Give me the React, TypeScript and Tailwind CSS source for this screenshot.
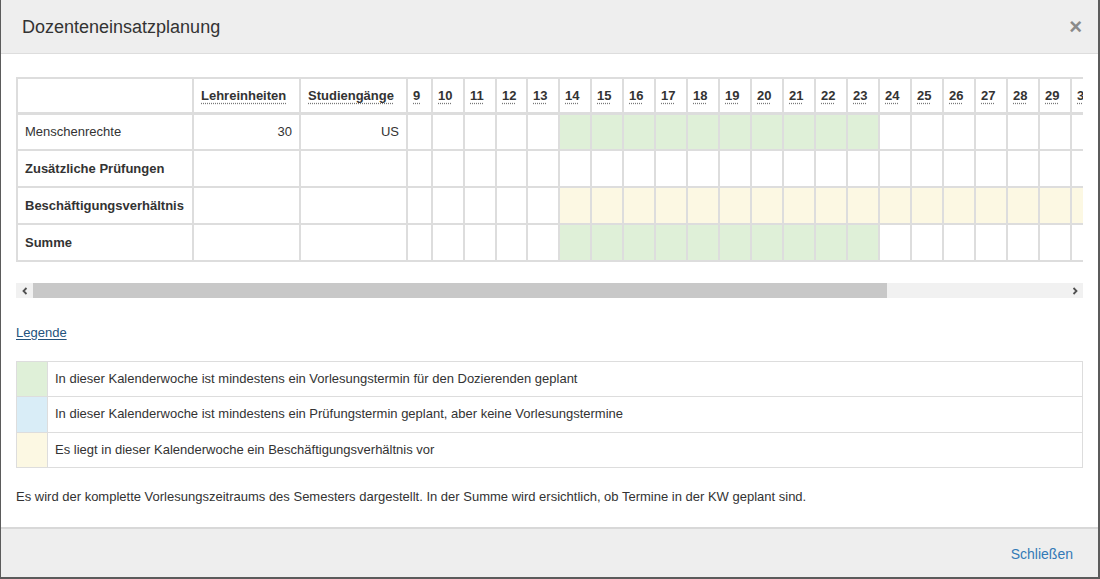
import React from "react";

const weeks = Array.from({ length: 27 }, (_, i) => i + 9);

type Row = {
  label: string;
  bold: boolean;
  le: string;
  sg: string;
  color: (w: number) => string;
};

const rows: Row[] = [
  { label: "Menschenrechte", bold: false, le: "30", sg: "US", color: (w) => (w >= 14 && w <= 23 ? "bg-[#dff0d8]" : "bg-white") },
  { label: "Zusätzliche Prüfungen", bold: true, le: "", sg: "", color: () => "bg-white" },
  { label: "Beschäftigungsverhältnis", bold: true, le: "", sg: "", color: (w) => (w >= 14 ? "bg-[#fcf8e3]" : "bg-white") },
  { label: "Summe", bold: true, le: "", sg: "", color: (w) => (w >= 14 && w <= 23 ? "bg-[#dff0d8]" : "bg-white") },
];

function Abbr({ children }: { children: React.ReactNode }) {
  return (
    <span className="underline decoration-dotted decoration-[#777] underline-offset-[3px]">{children}</span>
  );
}

function colClass(w: number) {
  if (w === 9) return "w-[25px]";
  if (w === 12) return "w-[31px]";
  return "w-[32px]";
}

export default function App() {
  return (
    <div
      className="w-[1100px] h-[579px] bg-[#5b5b5b] overflow-hidden text-[#333] text-[13px]"
      style={{ fontFamily: '"Liberation Sans", Arial, sans-serif' }}
    >
      <div className="ml-px w-[1097px] h-[577px] bg-white flex flex-col">
        {/* Header */}
        <div className="h-[54px] shrink-0 bg-[#eeeeee] border-b border-[#dddddd] flex items-center justify-between pl-[21px] pr-[15px]">
          <h4 className="text-[18px] leading-none text-[#333] pt-px">Dozenteneinsatzplanung</h4>
          <span className="text-[22px] font-bold leading-none text-[#8a8a8a] mr-[1px]">×</span>
        </div>

        {/* Body */}
        <div className="flex-1 pt-[23px] px-[15px]">
          <div className="w-[1067px] overflow-hidden">
            <table className="table-fixed border-collapse w-[1246px]">
              <colgroup>
                <col className="w-[176px]" />
                <col className="w-[107px]" />
                <col className="w-[107px]" />
                {weeks.map((w) => (
                  <col key={w} className={colClass(w)} />
                ))}
              </colgroup>
              <thead>
                <tr>
                  <th className="h-[35px] border-2 border-b-[3px] border-[#dddddd]" />
                  <th className="h-[35px] border-2 border-b-[3px] border-[#dddddd] px-[7px] text-left font-bold">
                    <Abbr>Lehreinheiten</Abbr>
                  </th>
                  <th className="h-[35px] border-2 border-b-[3px] border-[#dddddd] px-[7px] text-left font-bold">
                    <Abbr>Studiengänge</Abbr>
                  </th>
                  {weeks.map((w) => (
                    <th key={w} className="h-[35px] border-2 border-b-[3px] border-[#dddddd] px-[5px] text-left font-bold whitespace-nowrap overflow-hidden">
                      <Abbr>{w}</Abbr>
                    </th>
                  ))}
                </tr>
              </thead>
              <tbody>
                {rows.map((r) => (
                  <tr key={r.label}>
                    <td className={`h-[37px] border-2 border-[#dddddd] px-[7px] whitespace-nowrap ${r.bold ? "font-bold" : ""}`}>
                      {r.label}
                    </td>
                    <td className="h-[37px] border-2 border-[#dddddd] px-[7px] text-right">{r.le}</td>
                    <td className="h-[37px] border-2 border-[#dddddd] px-[7px] text-right">{r.sg}</td>
                    {weeks.map((w) => (
                      <td key={w} className={`h-[37px] border-2 border-[#dddddd] ${r.color(w)}`} />
                    ))}
                  </tr>
                ))}
              </tbody>
            </table>
          </div>

          {/* Scrollbar */}
          <div className="mt-[21px] w-[1067px] h-[15px] bg-[#f1f1f1] flex items-center">
            <div className="w-[17px] h-[15px] flex items-center justify-center">
              <svg width="8" height="8" viewBox="0 0 8 8">
                <path d="M5.5 1 L2.5 4 L5.5 7" fill="none" stroke="#505050" strokeWidth="1.8" />
              </svg>
            </div>
            <div className="w-[854px] h-[15px] bg-[#c8c8c8]" />
            <div className="flex-1" />
            <div className="w-[17px] h-[15px] flex items-center justify-center">
              <svg width="8" height="8" viewBox="0 0 8 8">
                <path d="M2.5 1 L5.5 4 L2.5 7" fill="none" stroke="#505050" strokeWidth="1.8" />
              </svg>
            </div>
          </div>

          {/* Legende */}
          <div className="mt-[25px]">
            <a className="text-[#23527c] underline underline-offset-2 leading-[18px]">Legende</a>
          </div>

          <table className="mt-[18px] w-[1067px] border-collapse">
            <tbody>
              <tr>
                <td className="w-[31px] h-[35px] border border-[#dddddd] bg-[#dff0d8]" />
                <td className="h-[35px] border border-[#dddddd] px-[7px]">
                  In dieser Kalenderwoche ist mindestens ein Vorlesungstermin für den Dozierenden geplant
                </td>
              </tr>
              <tr>
                <td className="w-[31px] h-[36px] border border-[#dddddd] bg-[#d9edf7]" />
                <td className="h-[36px] border border-[#dddddd] px-[7px]">
                  In dieser Kalenderwoche ist mindestens ein Prüfungstermin geplant, aber keine Vorlesungstermine
                </td>
              </tr>
              <tr>
                <td className="w-[31px] h-[35px] border border-[#dddddd] bg-[#fcf8e3]" />
                <td className="h-[35px] border border-[#dddddd] px-[7px]">
                  Es liegt in dieser Kalenderwoche ein Beschäftigungsverhältnis vor
                </td>
              </tr>
            </tbody>
          </table>

          <p className="mt-[20px] leading-[18px]">
            Es wird der komplette Vorlesungszeitraums des Semesters dargestellt. In der Summe wird ersichtlich, ob Termine in der KW geplant sind.
          </p>
        </div>

        {/* Footer */}
        <div className="h-[50px] shrink-0 bg-[#eeeeee] border-t-2 border-[#d8d8d8] flex items-center justify-end pr-[25px]">
          <button className="text-[14px] text-[#337ab7] pt-[2px]">Schließen</button>
        </div>
      </div>
    </div>
  );
}
